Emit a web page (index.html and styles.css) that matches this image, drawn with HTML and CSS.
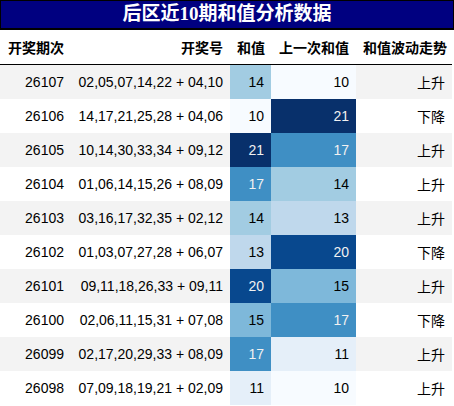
FILE: index.html
```html
<!DOCTYPE html>
<html lang="zh">
<head>
    <meta charset="UTF-8">
    <title>后区近10期和值分析数据</title>
    <link rel="stylesheet" href="styles.css">
</head>
<body>
    <div class="title">后区近10期和值分析数据</div>
    <table class="sum-table">
        <thead>
            <tr>
                <th class="left">开奖期次</th>
                <th>开奖号</th>
                <th>和值</th>
                <th>上一次和值</th>
                <th>和值波动走势</th>
            </tr>
        </thead>
        <tbody>
            <tr>
                <td>26107</td><td>02,05,07,14,22 + 04,10</td>
                <td class="b14">14</td><td class="b10">10</td><td>上升</td>
            </tr>
            <tr>
                <td>26106</td><td>14,17,21,25,28 + 04,06</td>
                <td class="b10">10</td><td class="b21">21</td><td>下降</td>
            </tr>
            <tr>
                <td>26105</td><td>10,14,30,33,34 + 09,12</td>
                <td class="b21">21</td><td class="b17">17</td><td>上升</td>
            </tr>
            <tr>
                <td>26104</td><td>01,06,14,15,26 + 08,09</td>
                <td class="b17">17</td><td class="b14">14</td><td>上升</td>
            </tr>
            <tr>
                <td>26103</td><td>03,16,17,32,35 + 02,12</td>
                <td class="b14">14</td><td class="b13">13</td><td>上升</td>
            </tr>
            <tr>
                <td>26102</td><td>01,03,07,27,28 + 06,07</td>
                <td class="b13">13</td><td class="b20">20</td><td>下降</td>
            </tr>
            <tr>
                <td>26101</td><td>09,11,18,26,33 + 09,11</td>
                <td class="b20">20</td><td class="b15">15</td><td>上升</td>
            </tr>
            <tr>
                <td>26100</td><td>02,06,11,15,31 + 07,08</td>
                <td class="b15">15</td><td class="b17">17</td><td>下降</td>
            </tr>
            <tr>
                <td>26099</td><td>02,17,20,29,33 + 08,09</td>
                <td class="b17">17</td><td class="b11">11</td><td>上升</td>
            </tr>
            <tr>
                <td>26098</td><td>07,09,18,19,21 + 02,09</td>
                <td class="b11">11</td><td class="b10">10</td><td>上升</td>
            </tr>
        </tbody>
    </table>
</body>
</html>
```

FILE: styles.css
```css
body {
    margin: 0;
    width: 454px;
    background-color: #fff;
    font-family: "Liberation Sans", "Noto Sans CJK SC", sans-serif;
    font-size: 14px;
    color: #000;
}

.title {
    box-sizing: border-box;
    width: 454px;
    height: 30px;
    border: 1px solid #000;
    border-bottom-width: 2px;
    background-color: #000080;
    color: #fff;
    font-family: "Liberation Serif", "Noto Sans CJK SC", serif;
    font-size: 19px;
    font-weight: bold;
    line-height: 26px;
    text-align: center;
}

.sum-table {
    width: 452px;
    border-collapse: collapse;
    table-layout: fixed;
}

.sum-table th,
.sum-table td {
    padding: 0 7px;
    text-align: right;
    white-space: nowrap;
}

.sum-table th {
    height: 34px;
    font-weight: bold;
    border-bottom: 1px solid #000;
}

.sum-table th.left {
    text-align: left;
    padding-left: 8px;
}

.sum-table td {
    height: 34px;
}

.sum-table th:nth-child(1) { width: 56px; }
.sum-table th:nth-child(2) { width: 145px; }
.sum-table th:nth-child(3) { width: 27px; }
.sum-table th:nth-child(4) { width: 71px; }

.sum-table tbody tr:nth-child(odd) {
    background-color: #f3f3f3;
}

/* Blues gradient, 10 to 21 */
.b10 { background-color: #f7fbff; color: #000; }
.b11 { background-color: #e5eff9; color: #000; }
.b13 { background-color: #bfd8ec; color: #000; }
.b14 { background-color: #a2cce2; color: #000; }
.b15 { background-color: #7eb8da; color: #000; }
.b17 { background-color: #3f8fc4; color: #f1f1f1; }
.b20 { background-color: #08488e; color: #f1f1f1; }
.b21 { background-color: #08306b; color: #f1f1f1; }
```
